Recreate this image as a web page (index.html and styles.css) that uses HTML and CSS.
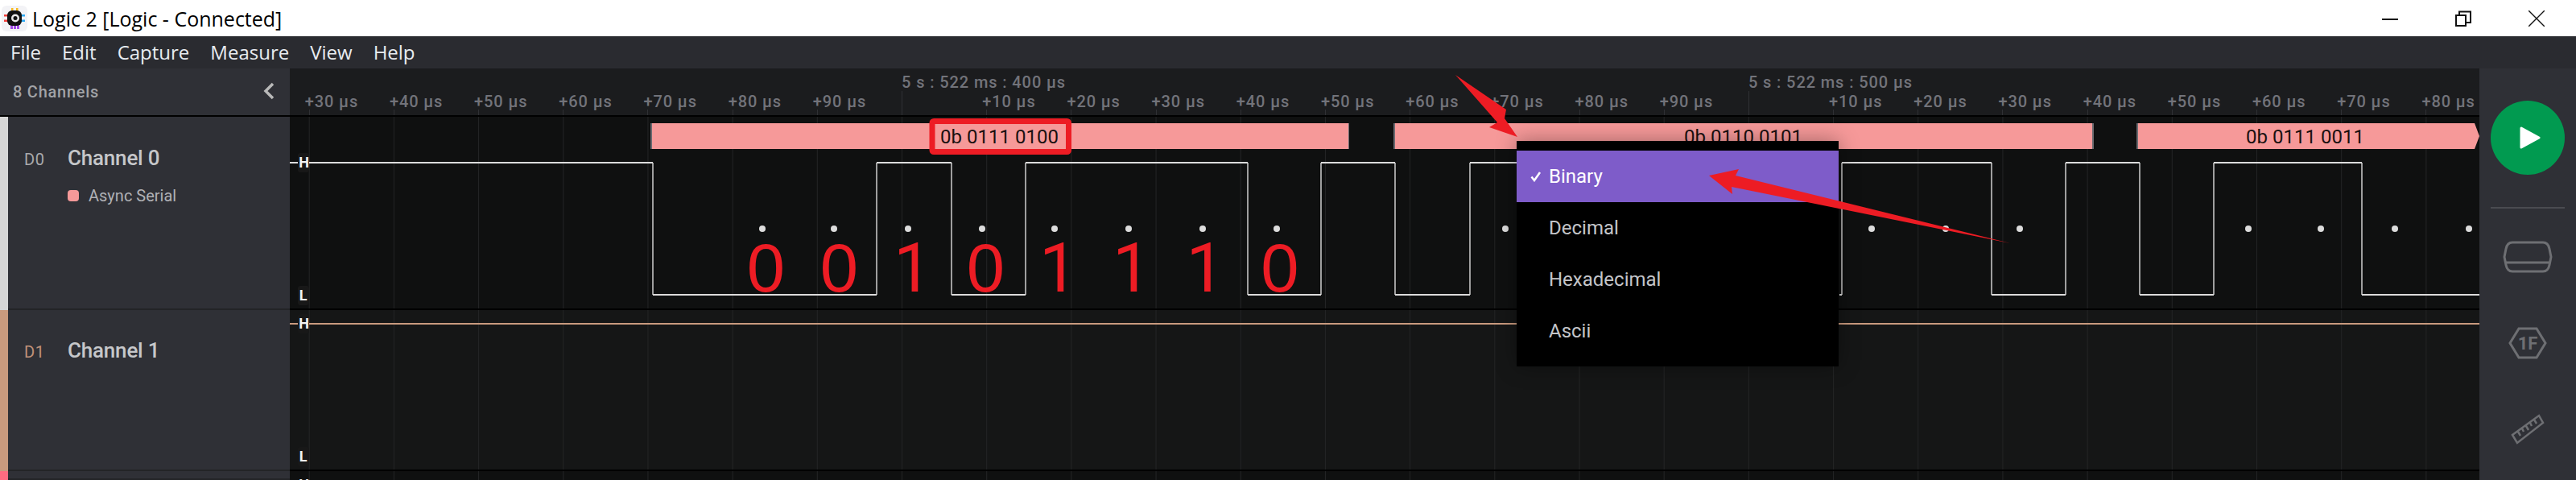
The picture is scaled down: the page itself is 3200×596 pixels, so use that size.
FILE: index.html
```html
<!DOCTYPE html>
<html lang="en">
<head>
<meta charset="utf-8">
<title>Logic 2</title>
<link rel="stylesheet" href="styles.css">
</head>
<body>
<div class="app">
  <header class="titlebar">
    <svg class="logo" width="32" height="32" viewBox="0 0 32 32">
      <rect x="0" y="0" width="32" height="32" rx="6" fill="#f3f3f6"/>
      <path d="M12 3h2.500v5H12zM18 3h2.500v5H18z" fill="#f5b820"/>
      <path d="M3 11h5v2.500H3zM3 17.500h5V20H3z" fill="#f0413c"/>
      <path d="M24 11h5v2.500h-5zM24 17.500h5V20h-5z" fill="#2ea8f2"/>
      <path d="M11 24h3v5h-3zM15 24h3v5h-3zM19 24h3v5h-3z" fill="#a24be8"/>
      <rect x="7" y="6" width="18" height="19" rx="6" fill="#111"/>
      <circle cx="17" cy="15.500" r="5" fill="#e8e8e8"/>
      <circle cx="17" cy="15.500" r="2.500" fill="#111"/>
    </svg>
    <span class="title">Logic 2 [Logic - Connected]</span>
    <div class="winctl">
      <svg width="20" height="20" viewBox="0 0 20 20"><path class="winline" d="M0 11h20"/></svg>
      <svg width="20" height="20" viewBox="0 0 20 20"><path class="winline" d="M1 6h12v13H1zM5 6V1.500h14V15h-6"/></svg>
      <svg width="20" height="20" viewBox="0 0 20 20"><path class="winline thin" d="M0 0l20 20M20 0L0 20"/></svg>
    </div>
  </header>

  <nav class="menubar">
    <span>File</span><span>Edit</span><span>Capture</span><span>Measure</span><span>View</span><span>Help</span>
  </nav>

  <div class="main">
    <aside class="sidebar">
      <div class="side-head">
        <span class="count">8 Channels</span>
        <svg class="chev" width="14" height="22" viewBox="0 0 14 22"><path d="M12 2L3 11l9 9" /></svg>
      </div>
      <div class="chan chan-0">
        <div class="chan-line"><span class="chan-id">D0</span><span class="chan-name">Channel 0</span></div>
        <div class="analyzer"><i class="swatch"></i><span>Async Serial</span></div>
      </div>
      <div class="chan chan-1">
        <div class="chan-line"><span class="chan-id">D1</span><span class="chan-name">Channel 1</span></div>
      </div>
      <div class="chan chan-2"></div>
    </aside>

    <section class="timeline">
      <div class="ruler">
        <div class="cell"><span class="lab">+30 µs</span></div>
        <div class="cell"><span class="lab">+40 µs</span></div>
        <div class="cell"><span class="lab">+50 µs</span></div>
        <div class="cell"><span class="lab">+60 µs</span></div>
        <div class="cell"><span class="lab">+70 µs</span></div>
        <div class="cell"><span class="lab">+80 µs</span></div>
        <div class="cell"><span class="lab">+90 µs</span></div>
        <div class="cell major"><span class="stamp">5 s : 522 ms : 400 µs</span></div>
        <div class="cell"><span class="lab">+10 µs</span></div>
        <div class="cell"><span class="lab">+20 µs</span></div>
        <div class="cell"><span class="lab">+30 µs</span></div>
        <div class="cell"><span class="lab">+40 µs</span></div>
        <div class="cell"><span class="lab">+50 µs</span></div>
        <div class="cell"><span class="lab">+60 µs</span></div>
        <div class="cell"><span class="lab">+70 µs</span></div>
        <div class="cell"><span class="lab">+80 µs</span></div>
        <div class="cell"><span class="lab">+90 µs</span></div>
        <div class="cell major"><span class="stamp">5 s : 522 ms : 500 µs</span></div>
        <div class="cell"><span class="lab">+10 µs</span></div>
        <div class="cell"><span class="lab">+20 µs</span></div>
        <div class="cell"><span class="lab">+30 µs</span></div>
        <div class="cell"><span class="lab">+40 µs</span></div>
        <div class="cell"><span class="lab">+50 µs</span></div>
        <div class="cell"><span class="lab">+60 µs</span></div>
        <div class="cell"><span class="lab">+70 µs</span></div>
        <div class="cell"><span class="lab">+80 µs</span></div>
      </div>
      <div class="tracks">
        <div class="track track-0"></div>
        <div class="track track-1"></div>
        <div class="track track-2"></div>
        <svg class="plot" width="2720" height="451" viewBox="360 145 2720 451">
          <rect class="bar-edge" x="808" y="153" width="868" height="32"/>
          <rect class="bar" x="810" y="153" width="865" height="32"/>
          <rect class="bar-edge" x="1731" y="153" width="870" height="32"/>
          <rect class="bar" x="1733" y="153" width="866" height="32"/>
          <rect class="bar-edge" x="2654" y="153" width="4" height="32"/>
          <polygon class="bar" points="2656,153 3074,153 3080,169 3074,185 2656,185"/>
          <text class="bar-text" x="1241.500" y="178">0b 0111 0100</text>
          <text class="bar-text" x="2165.500" y="178">0b 0110 0101</text>
          <text class="bar-text" x="2863.500" y="178">0b 0111 0011</text>

          <path class="sig-h" d="M360 202H811M811 366H1089M1089 202H1182M1182 366H1274M1274 202H1550M1550 366H1641M1641 202H1733M1733 366H1826M1826 202H1918M2285 366H2288M2288 202H2474M2474 366H2566M2566 202H2658M2658 366H2750M2750 202H2934M2934 366H3080"/>
          <path class="sig-v" d="M811 202V366M1089 366V202M1182 202V366M1274 366V202M1550 202V366M1641 366V202M1733 202V366M1826 366V202M2288 366V202M2474 202V366M2566 366V202M2658 202V366M2750 366V202M2934 202V366"/>
          <path class="sig-1" d="M360 402H3080"/>

          <g class="dots">
            <circle cx="947" cy="284" r="4"/><circle cx="1036" cy="284" r="4"/><circle cx="1128" cy="284" r="4"/>
            <circle cx="1220" cy="284" r="4"/><circle cx="1310" cy="284" r="4"/><circle cx="1402" cy="284" r="4"/>
            <circle cx="1494" cy="284" r="4"/><circle cx="1586" cy="284" r="4"/><circle cx="1870" cy="284" r="4"/>
            <circle cx="2325" cy="284" r="4"/><circle cx="2417" cy="284" r="4"/><circle cx="2509" cy="284" r="4"/>
            <circle cx="2793" cy="284" r="4"/><circle cx="2883" cy="284" r="4"/><circle cx="2975" cy="284" r="4"/>
            <circle cx="3067" cy="284" r="4"/>
          </g>

          <rect class="chip" x="370" y="190" width="14" height="24" rx="3"/>
          <text class="hl" x="377.500" y="208">H</text>
          <rect class="chip" x="370" y="355" width="14" height="24" rx="3"/>
          <text class="hl" x="376.500" y="373">L</text>
          <rect class="chip" x="370" y="390" width="14" height="24" rx="3"/>
          <text class="hl" x="377.500" y="408">H</text>
          <rect class="chip" x="370" y="555" width="14" height="24" rx="3"/>
          <text class="hl" x="376.500" y="573">L</text>
          <text class="hl" x="377.500" y="608">H</text>
        </svg>
      </div>
      <ul class="menu">
        <li class="item active"><svg class="check" width="14" height="14" viewBox="0 0 14 14"><path d="M1.500 7.500l3.500 4.500L12 2"/></svg>Binary</li>
        <li class="item">Decimal</li>
        <li class="item">Hexadecimal</li>
        <li class="item">Ascii</li>
      </ul>
    </section>

    <aside class="tools">
      <button class="play" type="button" aria-label="Start">
        <svg width="26" height="30" viewBox="0 0 26 30"><path d="M2 3l22 12L2 27z"/></svg>
      </button>
      <hr class="tool-rule">
      <svg class="tool tool-device" width="62" height="40" viewBox="0 0 62 40"><path d="M12 2h38c5 0 7 3 8 8l2 10-2 10c-1 5-4 8-8 8H12c-4 0-7-3-8-8L2 20l2-10c1-5 3-8 8-8zM3 27h56"/></svg>
      <svg class="tool tool-hex" width="48" height="40" viewBox="0 0 48 40">
        <path d="M13 2h22l11 18-11 18H13L2 20z"/>
        <text x="24" y="28">1F</text>
      </svg>
      <svg class="tool tool-ruler" width="42" height="40" viewBox="0 0 42 40"><path d="M2 27L35 3l5 9L8 37zM9 23l3 5M14 19l2 4M19 16l3 5M24 12l2 4M29 8l3 5"/></svg>
    </aside>
  </div>

  <svg class="marks" width="3200" height="596" viewBox="0 0 3200 596">
    <rect class="mark-box" x="1158" y="150.500" width="169.500" height="38" rx="2"/>
    <g class="digits">
      <text x="951.500" y="362">0</text><text x="1042.500" y="362">0</text><text class="one" x="1134" y="362">1</text>
      <text x="1224.500" y="362">0</text><text class="one" x="1315" y="362">1</text><text class="one" x="1406" y="362">1</text>
      <text class="one" x="1497.500" y="362">1</text><text x="1590" y="362">0</text>
    </g>
    <polygon class="arrow" points="1808,93 1871,136 1869,147 1885,170 1850,158 1860,152"/>
    <polygon class="arrow" points="2497,302 2156,218 2160,210 2123,218 2152,241 2151,232"/>
  </svg>
</div>
</body>
</html>
```
FILE: styles.css
```css
* { box-sizing: border-box; }
html, body { margin: 0; padding: 0; background: #000; }
.app {
  position: relative;
  width: 3200px;
  height: 596px;
  overflow: hidden;
  display: flex;
  flex-direction: column;
  font-family: Roboto, "Liberation Sans", sans-serif;
}

/* title bar */
.titlebar {
  height: 45px;
  flex: none;
  background: #fff;
  display: flex;
  align-items: center;
  padding-left: 2px;
  color: #000;
}
.logo { flex: none; margin-top: 1px; }
.title {
  margin-left: 6px;
  font: 25px/32px "Open Sans", "Noto Sans", sans-serif;
  white-space: nowrap;
}
.winctl {
  margin-left: auto;
  display: flex;
  gap: 71px;
  padding-right: 39px;
}
.winline { fill: none; stroke: #111; stroke-width: 2; }
.winline.thin { stroke-width: 1.4; }

/* menu */
.menubar {
  height: 40px;
  flex: none;
  background: #2a2b30;
  color: #e8ecf0;
  display: flex;
  align-items: center;
  gap: 26px;
  padding-left: 13px;
  font: 24px/40px "Open Sans", "Noto Sans", sans-serif;
}

.main { flex: 1; display: flex; min-height: 0; }

/* channel list */
.sidebar {
  width: 360px;
  flex: none;
  background: #2f3036;
  display: flex;
  flex-direction: column;
}
.side-head {
  height: 60px;
  flex: none;
  display: flex;
  align-items: center;
  justify-content: space-between;
  padding: 0 19px 0 16px;
  border-bottom: 2px solid #000;
}
.count { font-size: 20px; font-weight: 500; color: #a2a3a7; letter-spacing: 0.75px; }
.chev { fill: none; stroke: #b9b9b9; stroke-width: 3.500; margin-top: -2px; }
.chan {
  flex: none;
  border-left: 10px solid;
  padding-left: 20px;
  box-shadow: inset 0 -2px 0 #232427;
}
.chan-0 { height: 240px; border-left-color: #d6d6d6; padding-top: 36px; }
.chan-1 { height: 200px; border-left-color: #c99a7e; padding-top: 35px; }
.chan-2 { flex: 1; border-left-color: #ff6b80; }
.chan-line { display: flex; align-items: center; height: 30px; }
.chan-id { width: 54px; font-size: 20px; color: #a9a9ac; padding-top: 4px; letter-spacing: 0.6px; }
.chan-1 .chan-id { color: #c0927a; }
.chan-name { font-size: 26px; font-weight: 500; color: #c6c7ca; letter-spacing: -0.2px; }
.analyzer {
  display: flex;
  align-items: center;
  gap: 12px;
  margin: 20px 0 0 54px;
  font-size: 20px;
  color: #b0b1b5;
}
.swatch { width: 14px; height: 14px; border-radius: 4px; background: #f69999; flex: none; }

/* timeline */
.timeline { flex: 1; position: relative; min-width: 0; display: flex; flex-direction: column; }
.ruler {
  height: 60px;
  flex: none;
  background: #1b1c1e;
  border-bottom: 2px solid #000;
  padding-left: 23.700px;
  display: grid;
  grid-template-columns: repeat(26, 105.190px);
  overflow: hidden;
}
.cell { position: relative; border-left: 1px solid transparent; }
.cell::after {
  content: "";
  position: absolute;
  left: -1px;
  bottom: 0;
  width: 1px;
  height: 7px;
  background: #2f3034;
}
.cell.major::after { height: 30px; }
.lab {
  position: absolute;
  left: -6px;
  top: 29px;
  font-size: 20px;
  line-height: 24px;
  font-weight: 500;
  letter-spacing: 0.9px;
  color: #72737a;
  white-space: nowrap;
}
.stamp {
  position: absolute;
  left: -1px;
  top: 5px;
  font-size: 20px;
  line-height: 24px;
  font-weight: 500;
  letter-spacing: 0.9px;
  color: #72737a;
  white-space: nowrap;
}
.tracks { flex: 1; position: relative; min-height: 0; display: flex; flex-direction: column; }
.track {
  flex: none;
  background-image: linear-gradient(to right, #232425 0, #232425 1px, transparent 1px);
  background-size: 105.190px 100%;
  background-position: 23.700px 0;
  border-bottom: 2px solid #000;
}
.track-0 { height: 240px; background-color: #0f1010; }
.track-1 { height: 200px; background-color: #151616; }
.track-2 { flex: 1; background-color: #0f1010; border-bottom: 0; }
.plot { position: absolute; left: 0; top: 0; }
.bar { fill: #f69999; }
.bar-edge { fill: #6a6a70; }
.bar-text {
  font-family: Roboto, sans-serif;
  font-size: 24px;
  fill: #1a1010;
  text-anchor: middle;
}
.sig-h { fill: none; stroke: #dcdcdc; stroke-width: 2; }
.sig-v { fill: none; stroke: #dcdcdc; stroke-width: 1.400; }
.sig-1 { fill: none; stroke: #c99a7e; stroke-width: 2; }
.dots circle { fill: #dcdcdc; }
.chip { fill: #181818; }
.hl {
  font-family: Roboto, sans-serif;
  font-size: 18px;
  font-weight: 700;
  fill: #f4f4f4;
  text-anchor: middle;
}

/* dropdown */
.menu {
  position: absolute;
  left: 1524px;
  top: 90px;
  width: 400px;
  height: 280px;
  margin: 0;
  padding: 12px 0;
  list-style: none;
  background: #000;
  box-shadow: 0 0 24px rgba(0, 0, 0, 0.35);
}
.item {
  position: relative;
  height: 64px;
  padding-left: 40px;
  font-size: 24px;
  line-height: 64px;
  color: #c4c5c9;
}
.item.active { background: #7e5cc9; color: #fff; }
.check {
  position: absolute;
  left: 17px;
  top: 25px;
  fill: none;
  stroke: #fff;
  stroke-width: 2.500;
}

/* right tools */
.tools {
  width: 120px;
  flex: none;
  background: #2f3036;
  display: flex;
  flex-direction: column;
  align-items: center;
  padding-top: 40px;
}
.play {
  width: 92px;
  height: 92px;
  flex: none;
  border: 0;
  padding: 0 0 0 6px;
  border-radius: 50%;
  background: #019a50;
  display: flex;
  align-items: center;
  justify-content: center;
}
.play path { fill: #fff; stroke: #fff; stroke-width: 3; stroke-linejoin: round; }
.tool-rule {
  width: 92px;
  height: 2px;
  flex: none;
  border: 0;
  margin: 40px 0 40px;
  background: #4a4b50;
}
.tool { flex: none; fill: none; stroke: #6e6f73; stroke-width: 3; }
.tool-hex { margin-top: 67px; }
.tool-ruler { margin-top: 67px; stroke-width: 2.500; }
.tool-hex text {
  font-family: Roboto, sans-serif;
  font-size: 22px;
  font-weight: 700;
  fill: #6e6f73;
  stroke: none;
  text-anchor: middle;
}

/* red annotations laid over the app */
.marks { position: absolute; left: 0; top: 0; pointer-events: none; }
.mark-box { fill: none; stroke: #ed1c24; stroke-width: 7; }
.digits text {
  font-family: "Liberation Sans", Arial, sans-serif;
  font-size: 85px;
  fill: #ed1c24;
  text-anchor: middle;
}
.digits .one { font-family: Roboto, sans-serif; }
.arrow { fill: #ed1c24; }
```
